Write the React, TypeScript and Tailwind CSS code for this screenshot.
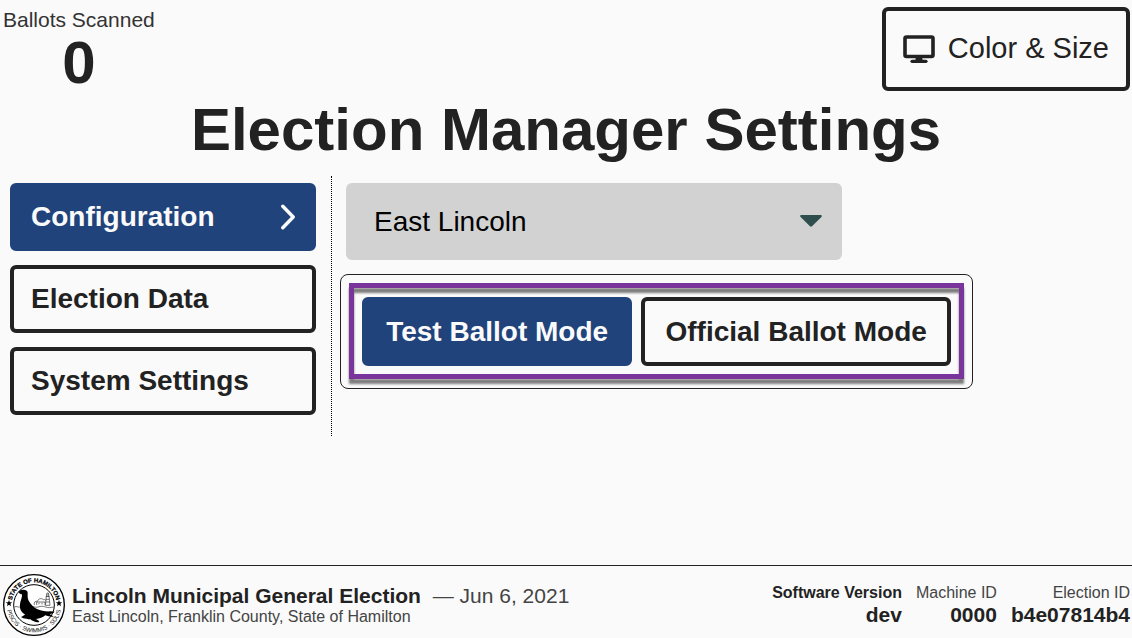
import { useState } from 'react'

function DisplayIcon() {
  return (
    <svg viewBox="0 0 32 28" className="h-7 w-8 shrink-0" fill="none" stroke="currentColor" aria-hidden="true">
      <rect x="2" y="2" width="28" height="19.5" rx="1.5" strokeWidth="3.6" />
      <path d="M13 22h6l.7 3h-7.400z" fill="currentColor" stroke="none" />
      <path d="M9 26.300h14" strokeWidth="3.200" strokeLinecap="round" />
    </svg>
  )
}

function ChevronIcon() {
  return (
    <svg viewBox="0 0 14 26" className="h-[26px] w-3.5 shrink-0" fill="none" stroke="currentColor" aria-hidden="true">
      <path d="M1.8 2.2 12.2 13 1.8 23.8" strokeWidth="3.4" strokeLinecap="round" strokeLinejoin="round" />
    </svg>
  )
}

function StateSeal() {
  return (
    <svg viewBox="0 0 186 186" className="h-[62px] w-[62px] shrink-0" role="img" aria-label="Seal of the State of Hamilton">
      <defs>
        <path id="seal-top" d="M25 93a68 68 0 0 1 136 0" />
        <path id="seal-bottom" d="M11 93a82 82 0 0 0 164 0" />
      </defs>
      <circle cx="93" cy="93" r="91" fill="#fff" stroke="#000" strokeWidth="4" />
      <circle cx="93" cy="93" r="61" fill="none" stroke="#000" strokeWidth="3" />
      <g fontFamily="'Liberation Sans Narrow', 'Liberation Sans', Arial, sans-serif" textAnchor="middle" fill="#000">
        <text fontSize="18" fontWeight="700" stroke="#000" strokeWidth="0.8">
          <textPath href="#seal-top" startOffset="50%">STATE OF HAMILTON</textPath>
        </text>
        <text fontSize="18" fill="#111">
          <textPath href="#seal-bottom" startOffset="50%">PISCIS · SWIMMIS · SOLIS</textPath>
        </text>
      </g>
      <path d="m18 78 2.6 6.5 7 .5-5.4 4.5 1.7 6.9L18 92.6l-5.900 3.800 1.700-6.900L8.400 85l7-.5z" />
      <path d="m168 78 2.600 6.500 7 .5-5.400 4.500 1.700 6.900-5.900-3.800-5.900 3.800 1.700-6.900-5.400-4.500 7-.5z" />
      <g fill="none" stroke="#333" strokeWidth="2">
        <path d="M34 99c8-4 10 2 16 0M82 99c10-4 14 3 23 0s14-3 23 0 14 2 24 0" />
        <path d="M94 93c-2-8 3-13 10-11 1-8 11-11 17-5 4-2 7 0 8 3M101 93V84h25v9M108 91v-5M117 91v-5" />
        <path d="M127 94l3-27h8l3 27zM128 67h12M131 67v-7h6v7M130 60l4-4 4 4M129 76h10M128 84h12" />
      </g>
      <path d="M47 54c3-6 11-8 18-6 6 1 9 4 9 9 0 8-1 16 3 23 6 11 14 19 25 25 11 5 26 8 40 7l13 1c-4 5-9 6-15 7 4 3 9 5 12 8-9 1-18-1-25-4-8 7-17 10-28 11 5 3 8 5 10 9-10 2-19-2-27-8-8 0-15-2-21-3l-7-4c5-2 9-4 12-8-12-6-17-17-15-30 1-12 7-19 6-30-4 0-9-2-10-7z" />
    </svg>
  )
}

const sections = ['Configuration', 'Election Data', 'System Settings']
const modes = ['Test Ballot Mode', 'Official Ballot Mode']

const buttonBase = 'rounded-md border-4 text-[28px] leading-8 font-bold whitespace-nowrap'
const selectedStyle = 'border-[#20437c] bg-[#20437c] text-[#fafafa]'
const plainStyle = 'border-[#222] bg-[#fafafa] text-[#222]'

function VersionItem({ label, value, strong = false }: { label: string; value: string; strong?: boolean }) {
  return (
    <div className="text-right">
      <dt className={strong ? 'text-base leading-5 font-bold' : 'text-base leading-5 text-[#444]'}>{label}</dt>
      <dd className="text-[21px] leading-6 font-bold">{value}</dd>
    </div>
  )
}

export default function App() {
  const [section, setSection] = useState(sections[0])
  const [mode, setMode] = useState(modes[0])

  return (
    <div className="flex min-h-screen flex-col bg-[#fafafa] font-['Liberation_Sans',Arial,sans-serif] text-[#222]">
      <header className="flex items-start justify-between pt-[7px] pr-0.5 pl-[3px]">
        <div className="text-center">
          <div className="text-[21px] leading-[26px] text-[#333]">Ballots Scanned</div>
          <div className="text-[60px] leading-[60px] font-bold">0</div>
        </div>
        <button type="button" className="flex h-[84px] items-center gap-[13px] rounded-md border-4 border-[#222] px-[17px] text-[29px] whitespace-nowrap">
          <DisplayIcon />
          Color &amp; Size
        </button>
      </header>

      <h1 className="mt-1 text-center text-[60px] leading-[66px] font-bold">Election Manager Settings</h1>

      <main className="mt-[13px] flex grow items-start">
        <nav className="flex w-[332px] shrink-0 flex-col gap-3.5 self-start border-r border-dotted border-black pt-[7px] pr-[15px] pb-[21px] pl-2.5" aria-label="Settings sections">
          {sections.map((name) => (
            <button
              key={name}
              type="button"
              onClick={() => setSection(name)}
              aria-current={section === name ? 'page' : undefined}
              className={`flex h-[68px] items-center justify-between px-[17px] ${buttonBase} ${section === name ? selectedStyle : plainStyle}`}
            >
              {name}
              {section === name && <ChevronIcon />}
            </button>
          ))}
        </nav>

        <section className="min-w-0 grow pt-[7px] pl-2">
          <div className="relative ml-1.5 max-w-[496px]">
            <select
              aria-label="Precinct"
              defaultValue="East Lincoln"
              className="h-[77px] w-full appearance-none rounded-md bg-[#d2d2d2] px-7 text-[28px] text-black"
            >
              <option>East Lincoln</option>
            </select>
            <svg viewBox="0 0 22 12" className="pointer-events-none absolute top-8 right-5 h-3 w-[22px]" aria-hidden="true">
              <path d="M1.5 0h19c1.3 0 1.8 1.2.9 2.1L12 11.3c-.6.6-1.4.6-2 0L.6 2.1C-.3 1.2.2 0 1.5 0z" fill="#2f4f4f" />
            </svg>
          </div>

          <div className="relative mt-3.5 flex max-w-[633px] gap-[9px] rounded-lg border border-[#222] px-[21px] py-[22px]" role="group" aria-label="Ballot mode">
            <div className="pointer-events-none absolute inset-x-2 top-2 bottom-[9px] border-[5px] border-[#7a359c] drop-shadow-[0px_5px_1px_rgba(0,0,0,0.5)]" />
            {modes.map((name) => (
              <button
                key={name}
                type="button"
                aria-pressed={mode === name}
                onClick={() => setMode(name)}
                className={`relative h-[69px] grow px-3 ${buttonBase} ${mode === name ? selectedStyle : plainStyle}`}
              >
                {name}
              </button>
            ))}
          </div>
        </section>
      </main>

      <footer className="flex items-center justify-between gap-4 border-t border-[#222] pt-2 pr-0.5 pb-0.5 pl-[3px]">
        <div className="flex items-center gap-[7px]">
          <StateSeal />
          <div>
            <div className="text-[21px] leading-6">
              <strong>Lincoln Municipal General Election</strong> <span className="ml-1.5 text-[#444]">— Jun 6, 2021</span>
            </div>
            <div className="text-base leading-[18px] text-[#444]">East Lincoln, Franklin County, State of Hamilton</div>
          </div>
        </div>
        <dl className="flex gap-3.5">
          <VersionItem label="Software Version" value="dev" strong />
          <VersionItem label="Machine ID" value="0000" />
          <VersionItem label="Election ID" value="b4e07814b4" />
        </dl>
      </footer>
    </div>
  )
}
